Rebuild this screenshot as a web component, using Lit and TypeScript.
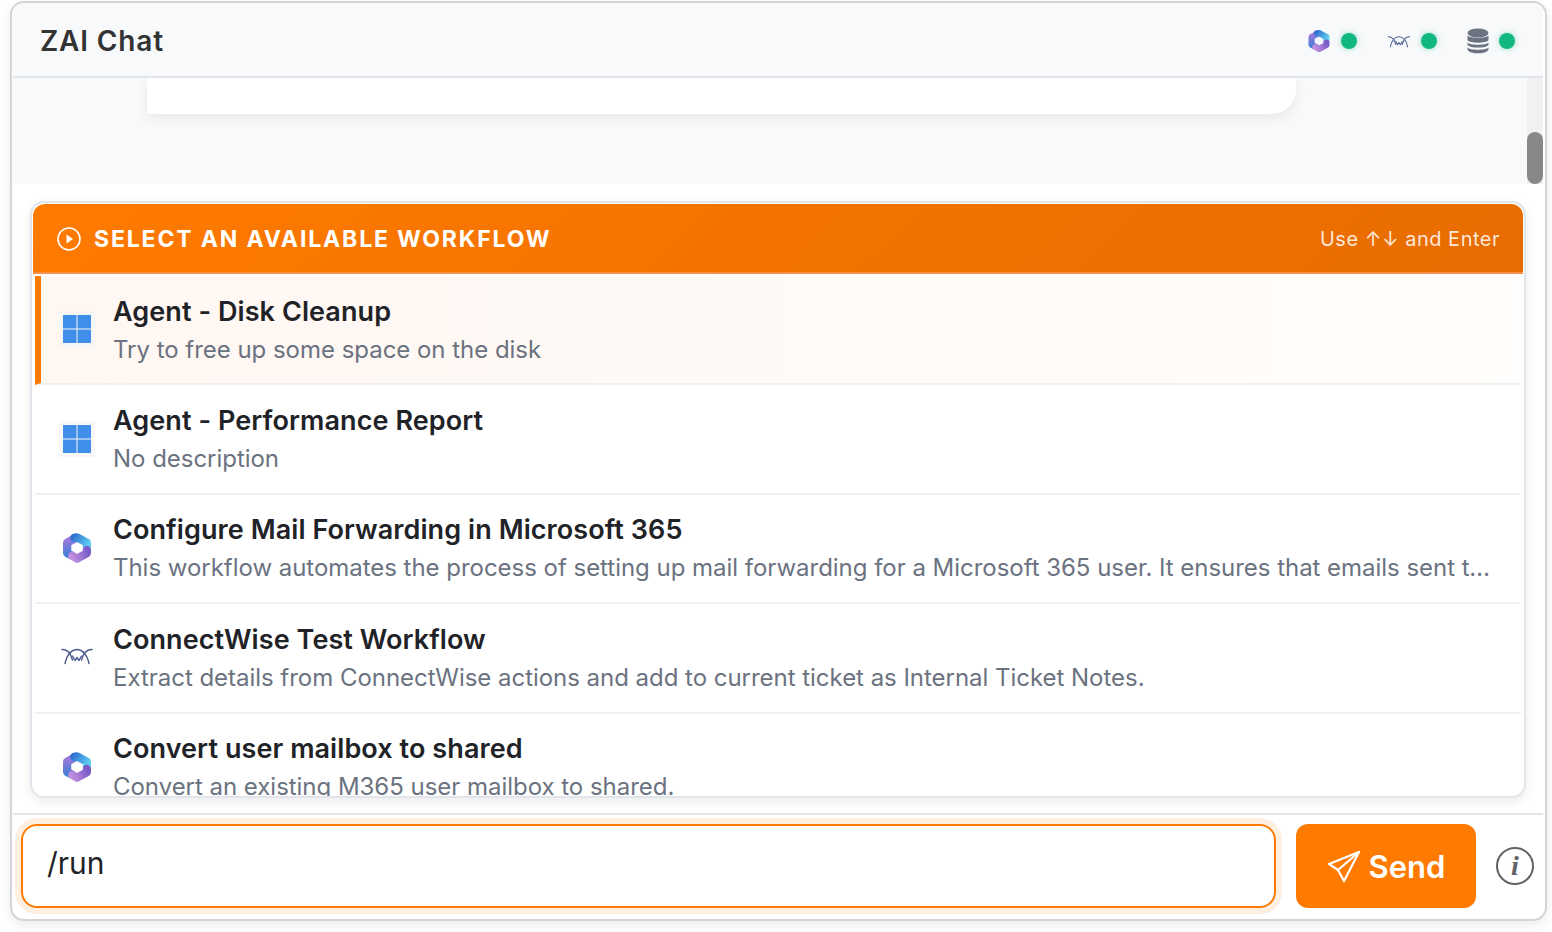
import {LitElement, html, css, svg} from 'lit';
import {customElement} from 'lit/decorators.js';

type Kind = 'windows' | 'm365' | 'cw';

const workflows: {kind: Kind; title: string; desc: string}[] = [
  {kind: 'windows', title: 'Agent - Disk Cleanup', desc: 'Try to free up some space on the disk'},
  {kind: 'windows', title: 'Agent - Performance Report', desc: 'No description'},
  {
    kind: 'm365',
    title: 'Configure Mail Forwarding in Microsoft 365',
    desc: 'This workflow automates the process of setting up mail forwarding for a Microsoft 365 user. It ensures that emails sent to the designated address are delivered on to another mailbox.',
  },
  {kind: 'cw', title: 'ConnectWise Test Workflow', desc: 'Extract details from ConnectWise actions and add to current ticket as Internal Ticket Notes.'},
  {kind: 'm365', title: 'Convert user mailbox to shared', desc: 'Convert an existing M365 user mailbox to shared.'},
];

let gradId = 0;

// rough redraw of the Microsoft 365 hexagon ring
function m365Icon(size: number) {
  const id = `m${gradId++}`;
  return html`<svg width=${size} height=${size} viewBox="0 0 24 24" fill="none">
    <defs>
      <linearGradient id="${id}a" x1="4" y1="4" x2="6" y2="18" gradientUnits="userSpaceOnUse">
        <stop offset="0" stop-color="#a878dc" />
        <stop offset="1" stop-color="#3f7fd8" />
      </linearGradient>
      <linearGradient id="${id}b" x1="9" y1="3" x2="21" y2="11" gradientUnits="userSpaceOnUse">
        <stop offset="0" stop-color="#2f6fd0" />
        <stop offset="1" stop-color="#62d6f5" />
      </linearGradient>
      <linearGradient id="${id}c" x1="20" y1="14" x2="8" y2="20" gradientUnits="userSpaceOnUse">
        <stop offset="0" stop-color="#7a5cc8" />
        <stop offset="1" stop-color="#c490e0" />
      </linearGradient>
    </defs>
    ${svg`<path d="M11 4.5 L4.6 8 V15.8 L8 17.6" stroke="url(#${id}a)" stroke-width="6.2" stroke-linejoin="round" stroke-linecap="round" />
    <path d="M10 4.4 L12 4 L19.4 8 V11" stroke="url(#${id}b)" stroke-width="6.2" stroke-linejoin="round" stroke-linecap="round" />
    <path d="M19.4 13.5 V16 L12 20 L8.5 18" stroke="url(#${id}c)" stroke-width="6.2" stroke-linejoin="round" stroke-linecap="round" />`}
  </svg>`;
}

function cwIcon(width: number) {
  return html`<svg width=${width} height=${Math.round(width * 0.55)} viewBox="0 0 32 18" fill="none" stroke="#4a5a8c" stroke-width="1.4" stroke-linecap="round" stroke-linejoin="round">
    <path d="M1 2.5 C6 2 9.5 6 11.5 13" />
    <path d="M31 2.5 C26 2 22.5 6 20.5 13" />
    <path d="M4 16.5 C6 7 11 2.5 16 2.5 C21 2.5 26 7 28 16.5" />
    <path d="M11.5 9 L14 13.5 L16 10.5 L18 13.5 L20.5 9" />
  </svg>`;
}

function dbIcon() {
  return html`<svg width="22" height="26" viewBox="0 0 22 26" fill="#6b7280">
    <ellipse cx="11" cy="5" rx="10.5" ry="4.6" />
    <path d="M.5 7.6 C2.5 10.6 19.5 10.6 21.5 7.6 V12 C19.5 15.6 2.5 15.6 .5 12 Z" />
    <path d="M.5 14.4 C2.5 17.4 19.5 17.4 21.5 14.4 V17 C19.5 20.4 2.5 20.4 .5 17 Z" />
    <path d="M.5 19.4 C2.5 22.4 19.5 22.4 21.5 19.4 V21.4 C19.5 26.6 2.5 26.6 .5 21.4 Z" />
  </svg>`;
}

function windowsIcon() {
  return html`<svg width="36" height="36" viewBox="0 0 36 36">
    <rect width="36" height="36" fill="#f3f3f3" opacity="0.7" />
    <rect x="4" y="4" width="13.5" height="13.5" fill="#3e8eea" />
    <rect x="18.5" y="4" width="13.5" height="13.5" fill="#3e8eea" />
    <rect x="4" y="18.5" width="13.5" height="13.5" fill="#3e8eea" />
    <rect x="18.5" y="18.5" width="13.5" height="13.5" fill="#3e8eea" />
  </svg>`;
}

@customElement('app-root')
export class AppRoot extends LitElement {
  static override styles = css`
    * {
      box-sizing: border-box;
      margin: 0;
      padding: 0;
    }

    :host {
      display: block;
      box-sizing: border-box;
      width: 1552px;
      height: 932px;
      padding: 1px 5px 11px 10px;
      background: #fff;
      font-family: Inter, "Liberation Sans", sans-serif;
      overflow: hidden;
    }

    .window {
      height: 920px;
      border: 2px solid #d4d4d6;
      border-radius: 14px;
      overflow: hidden;
      background: #fff;
      display: flex;
      flex-direction: column;
      box-shadow: 0 4px 12px rgba(0, 0, 0, 0.08);
    }

    .top {
      height: 75px;
      flex: none;
      margin: 0 2px 0 1px;
      background: #f8f9fb;
      border-bottom: 2px solid #e2e4ec;
      display: flex;
      align-items: center;
      justify-content: space-between;
      padding: 3px 28px 0 27px;
    }

    .top h1 {
      font-size: 28px;
      font-weight: 600;
      color: #333;
      letter-spacing: 0.85px;
    }

    .statuses {
      display: flex;
      align-items: center;
    }

    .status {
      display: flex;
      align-items: center;
      gap: 10px;
      margin-left: 30px;
    }

    .status svg {
      display: block;
    }

    .dot {
      width: 16px;
      height: 16px;
      border-radius: 50%;
      background: #10b981;
      box-shadow: 0 0 6px rgba(16, 185, 129, 0.4);
    }

    .messages {
      height: 106px;
      flex: none;
      margin: 0 2px 0 1px;
      display: flex;
      background: #f8f9fa;
    }

    .scroll-area {
      flex: 1;
      padding: 0 231px 0 134px;
      overflow: hidden;
    }

    .bubble {
      height: 36px;
      background: #fff;
      border-radius: 0 0 24px 4px;
      box-shadow: 0 4px 12px rgba(0, 0, 0, 0.07);
    }

    .scrollbar {
      width: 16px;
      flex: none;
      background: #f1f1f1;
      display: flex;
      align-items: flex-end;
    }

    .thumb {
      width: 16px;
      height: 52px;
      border-radius: 8px;
      background: #888;
    }

    .panel {
      flex: 1;
      min-height: 0;
      padding: 17px 19px 17px 18px;
      display: flex;
    }

    .dropdown {
      flex: 1;
      min-width: 0;
      height: 597px;
      border: 2px solid #e2e6ec;
      border-radius: 14px;
      background: #fff;
      overflow: hidden;
      box-shadow: 0 4px 12px rgba(0, 0, 0, 0.08);
    }

    .dd-head {
      height: 70px;
      margin: 1px 1px 0 1px;
      border-radius: 12px 12px 0 0;
      background: linear-gradient(135deg, #ff7a00 0%, #e86c00 100%);
      border-bottom: 2px solid #f6904a;
      display: flex;
      align-items: center;
      justify-content: space-between;
      padding: 2px 23px 0 24px;
      color: #fff;
    }

    .dd-title {
      display: flex;
      align-items: center;
      gap: 13px;
      font-size: 23px;
      font-weight: 700;
      letter-spacing: 1.85px;
    }

    .dd-title svg {
      display: block;
    }

    .hint {
      font-size: 20px;
      color: rgba(255, 255, 255, 0.85);
      letter-spacing: 0.5px;
    }

    .list {
      padding: 2px 3px 0 3px;
    }

    .row {
      height: 109.4px;
      display: flex;
      align-items: center;
      border-bottom: 2px solid #f0f0f0;
      padding-top: 2px;
      padding-left: 24px;
      gap: 18px;
    }

    .row.active {
      background: linear-gradient(90deg, #fff7f2, #fffdfb);
      border-left: 6px solid #ff7a00;
      padding-left: 18px;
    }

    .icon {
      width: 36px;
      height: 36px;
      flex: none;
      margin-bottom: 3px;
      display: flex;
      align-items: center;
      justify-content: center;
    }

    .icon.cw {
      margin-bottom: 6px;
    }

    .text {
      flex: 1;
      min-width: 0;
      padding-right: 30px;
    }

    .name {
      font-size: 27px;
      line-height: 36px;
      font-weight: 600;
      color: #1f2328;
      letter-spacing: 0.08px;
    }

    .desc {
      margin-top: 2px;
      font-size: 24px;
      line-height: 36px;
      letter-spacing: -0.03px;
      color: #6b7280;
      white-space: nowrap;
      overflow: hidden;
      text-overflow: ellipsis;
    }

    .composer {
      flex: none;
      height: 106px;
      margin: 0 2px 0 1px;
      border-top: 2px solid #e2e6ec;
      padding: 9px 0 0 8px;
      display: flex;
      gap: 20px;
    }

    .input {
      width: 1255px;
      height: 84px;
      border: 2px solid #ff7a00;
      border-radius: 16px;
      box-shadow: 0 0 0 6px rgba(255, 122, 0, 0.12);
      padding: 0 24px 6px;
      display: flex;
      align-items: center;
      font-size: 30px;
      color: #1f2328;
    }

    .send {
      width: 180px;
      height: 84px;
      border: none;
      border-radius: 12px;
      background: #ff7a00;
      color: #fff;
      font-family: inherit;
      font-size: 31px;
      font-weight: 600;
      display: flex;
      align-items: center;
      justify-content: center;
      gap: 8px;
    }

    .info {
      width: 38px;
      height: 38px;
      margin: 23px 0 0 0;
      flex: none;
      border: 2px solid #5f6368;
      border-radius: 50%;
      display: flex;
      align-items: center;
      justify-content: center;
      font-family: "Liberation Serif", serif;
      font-style: italic;
      font-weight: 700;
      font-size: 28px;
      color: #5f6368;
    }
  `;

  private renderIcon(kind: Kind) {
    if (kind === 'windows') return windowsIcon();
    if (kind === 'm365') return m365Icon(32);
    return cwIcon(32);
  }

  override render() {
    return html`
      <div class="window">
        <header class="top">
          <h1>ZAI Chat</h1>
          <div class="statuses">
            <div class="status">${m365Icon(24)}<span class="dot"></span></div>
            <div class="status">${cwIcon(24)}<span class="dot"></span></div>
            <div class="status">${dbIcon()}<span class="dot"></span></div>
          </div>
        </header>
        <div class="messages">
          <div class="scroll-area"><div class="bubble"></div></div>
          <div class="scrollbar"><div class="thumb"></div></div>
        </div>
        <div class="panel">
          <div class="dropdown">
            <div class="dd-head">
              <div class="dd-title">
                <svg width="24" height="24" viewBox="0 0 24 24" fill="none" stroke="#fff" stroke-width="1.6">
                  <circle cx="12" cy="12" r="11" />
                  <path d="M9.5 7.5 L16 12 L9.5 16.5 Z" fill="#fff" stroke="none" />
                </svg>
                SELECT AN AVAILABLE WORKFLOW
              </div>
              <div class="hint">Use ↑↓ and Enter</div>
            </div>
            <div class="list">
              ${workflows.map(
                (w, i) => html`
                  <div class="row ${i === 0 ? 'active' : ''}">
                    <div class="icon ${w.kind}">${this.renderIcon(w.kind)}</div>
                    <div class="text">
                      <div class="name">${w.title}</div>
                      <div class="desc">${w.desc}</div>
                    </div>
                  </div>
                `
              )}
            </div>
          </div>
        </div>
        <div class="composer">
          <div class="input">/run</div>
          <button class="send">
            <svg width="34" height="34" viewBox="0 0 34 34" fill="none" stroke="#fff" stroke-width="2.2" stroke-linejoin="round" stroke-linecap="round">
              <path d="M32 3 L2 15 L11 21 L17 32 Z" />
              <path d="M32 3 L11 21" />
            </svg>
            Send
          </button>
          <div class="info">i</div>
        </div>
      </div>
    `;
  }
}

declare global {
  interface HTMLElementTagNameMap {
    'app-root': AppRoot;
  }
}
